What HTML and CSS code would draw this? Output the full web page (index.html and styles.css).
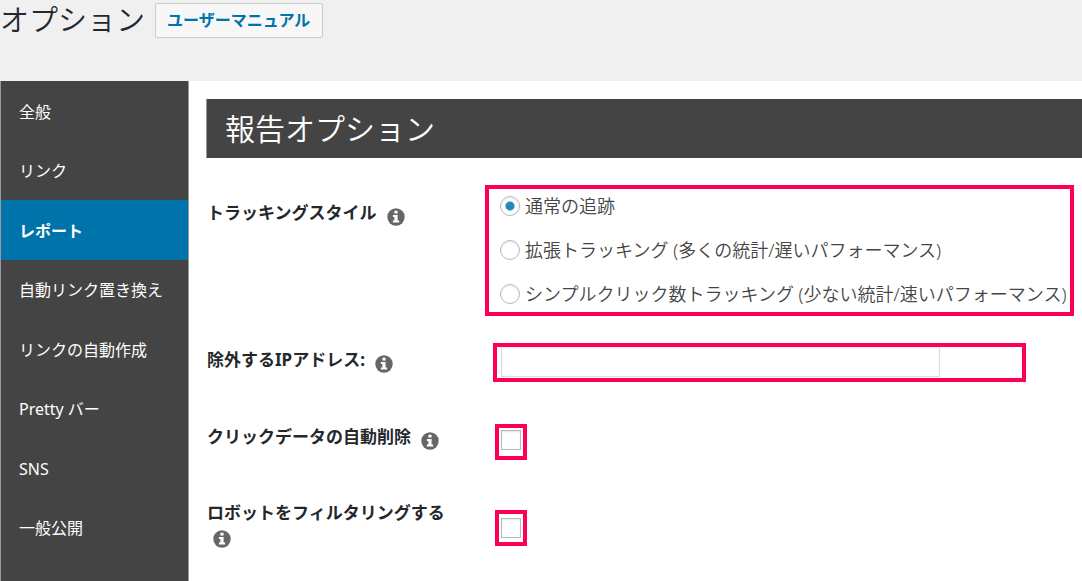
FILE: index.html
```html
<!DOCTYPE html>
<html lang="ja">
<head>
<meta charset="utf-8">
<title>オプション</title>
<link rel="stylesheet" href="styles.css">
</head>
<body>
<svg class="sprite" aria-hidden="true">
  <symbol id="info" viewBox="0 0 18 18">
    <circle cx="9" cy="9" r="8.7" fill="#666"/>
    <path fill="#fff" d="M7.4 2.8h3.2v2.6H7.4zM5.9 7h4.7v5.4h1.5v2H5.9v-2h1.5V9H5.9z"/>
  </symbol>
</svg>
<header class="page-header">
  <h1 class="page-title">オプション</h1>
  <a class="manual-link" href="#">ユーザーマニュアル</a>
</header>
<div class="layout">
  <nav class="sidebar">
    <a class="tab" href="#">全般</a>
    <a class="tab" href="#">リンク</a>
    <a class="tab tab-active" href="#" aria-current="page">レポート</a>
    <a class="tab" href="#">自動リンク置き換え</a>
    <a class="tab" href="#">リンクの自動作成</a>
    <a class="tab" href="#">Pretty バー</a>
    <a class="tab" href="#">SNS</a>
    <a class="tab" href="#">一般公開</a>
  </nav>
  <main class="content">
    <h2 class="section-title">報告オプション</h2>
    <form class="options">
      <div class="row row-tracking" role="radiogroup" aria-labelledby="tracking-label">
        <div class="label"><span id="tracking-label">トラッキングスタイル</span> <svg class="info"><use href="#info"/></svg></div>
        <div class="field mark mark-radios">
          <label class="choice"><input class="radio" type="radio" name="tracking" checked>通常の追跡</label>
          <label class="choice"><input class="radio" type="radio" name="tracking">拡張トラッキング (多くの統計/遅いパフォーマンス)</label>
          <label class="choice"><input class="radio" type="radio" name="tracking">シンプルクリック数トラッキング (少ない統計/速いパフォーマンス)</label>
        </div>
      </div>
      <div class="row row-ip">
        <div class="label"><label for="ip">除外するIPアドレス:</label> <svg class="info"><use href="#info"/></svg></div>
        <div class="field mark mark-text"><input class="text-input" id="ip" type="text"></div>
      </div>
      <div class="row row-delete">
        <div class="label"><label for="auto-delete">クリックデータの自動削除</label> <svg class="info"><use href="#info"/></svg></div>
        <div class="field mark mark-check"><input class="checkbox" id="auto-delete" type="checkbox"></div>
      </div>
      <div class="row row-robots">
        <div class="label"><label for="robots">ロボットをフィルタリングする</label> <svg class="info"><use href="#info"/></svg></div>
        <div class="field mark mark-check"><input class="checkbox" id="robots" type="checkbox"></div>
      </div>
    </form>
  </main>
</div>
</body>
</html>
```
FILE: styles.css
```css
* {
  box-sizing: border-box;
}

body {
  display: flex;
  flex-direction: column;
  min-height: 100vh;
  margin: 0;
  background: #f0f0f0;
  color: #23282d;
  font-family: "Noto Sans", "Noto Sans CJK JP", sans-serif;
  font-size: 16px;
}

.sprite {
  position: absolute;
  width: 0;
  height: 0;
}

.page-header {
  display: flex;
  align-items: flex-start;
  gap: 10px;
  height: 81px;
}

.page-title {
  margin: 0;
  font-size: 29px;
  font-weight: 350;
  line-height: 40px;
}

.manual-link {
  margin-top: 3px;
  padding: 0 12px 0 11px;
  border: 1px solid #ccc;
  border-radius: 2px;
  background: #f7f7f7;
  color: #0073aa;
  font-weight: 700;
  line-height: 33px;
  text-decoration: none;
}

.layout {
  display: flex;
  flex: 1;
  background: #fff;
}

.sidebar {
  display: flex;
  flex: none;
  flex-direction: column;
  width: 189px;
  padding-bottom: 24px;
  border: solid #999;
  border-width: 0 1px;
  background: #444;
}

.tab {
  display: flex;
  flex: 1;
  align-items: center;
  padding: 2px 18px 0;
  color: #fff;
  line-height: 24px;
  text-decoration: none;
  white-space: nowrap;
}

.tab-active {
  background: #0073aa;
  font-weight: 700;
}

.content {
  flex: 1;
  min-width: 0;
  padding: 18px 0 0 17px;
}

.section-title {
  margin: 0;
  padding: 0 18px;
  border-left: 1px solid #999;
  background: #444;
  color: #fff;
  font-size: 30px;
  font-weight: 350;
  line-height: 59px;
}

.options {
  padding: 27px 8px 0 1px;
}

.row {
  display: grid;
  grid-template-columns: 260px 1fr;
  column-gap: 18px;
  align-items: start;
}

.row-ip {
  margin-top: 27px;
}

.row-delete {
  margin-top: 42px;
}

.row-robots {
  margin-top: 40px;
}

.label {
  padding-top: 2px;
  font-size: 17px;
  font-weight: 700;
  line-height: 22px;
}

.row-tracking .label {
  padding-top: 17px;
}

.row-ip .label {
  padding-top: 6px;
}

.info {
  width: 18px;
  height: 18px;
  margin: -4px 0 -4px 6px;
  vertical-align: -3px;
}

.mark {
  border: 4px solid #ff0050;
}

.mark-radios {
  display: grid;
  gap: 18px;
  padding: 4px 0 5px 11px;
}

.choice {
  display: flex;
  align-items: center;
  gap: 5px;
  color: #444;
  font-size: 18px;
  font-weight: 350;
  line-height: 26px;
  white-space: nowrap;
}

.radio,
.checkbox {
  flex: none;
  width: 20px;
  height: 20px;
  margin: 0;
  border: 1px solid #b4b9be;
  background: #fff;
  box-shadow: inset 0 1px 2px rgba(0, 0, 0, 0.1);
  appearance: none;
}

.radio {
  border-radius: 50%;
}

.radio:checked {
  background: radial-gradient(circle, #1e8cbe 4px, #fff 5px);
}

.mark-text {
  margin: 0 48px 0 8px;
  padding: 0 82px 1px 4px;
}

.text-input {
  display: block;
  width: 100%;
  height: 30px;
  padding: 0 6px;
  border: 1px solid #ddd;
  border-top: 0;
  background: #fff;
  box-shadow: inset 0 1px 2px rgba(0, 0, 0, 0.07);
  font: inherit;
}

.mark-check {
  justify-self: start;
  margin-left: 10px;
  padding: 2px 2px 6px;
}

.checkbox {
  display: block;
}

.row-robots .mark-check {
  margin-top: 10px;
  padding: 4px 2px;
}
```
